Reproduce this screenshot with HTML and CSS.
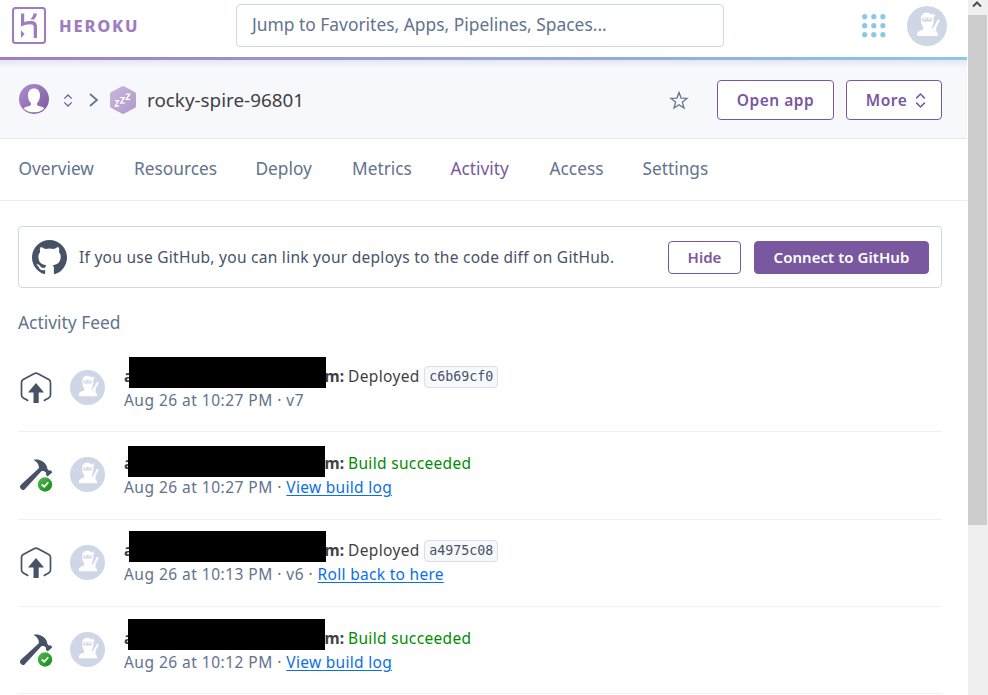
FILE: index.html
```html
<!DOCTYPE html>
<html lang="en">
<head>
<meta charset="utf-8">
<title>rocky-spire-96801 · Activity | Heroku</title>
<link rel="stylesheet" href="styles.css">
</head>
<body>
<svg class="defs" aria-hidden="true">
  <defs>
    <linearGradient id="purple" x1="0" y1="0" x2="1" y2="1"><stop stop-color="#b08ed2"/><stop offset="1" stop-color="#79589f"/></linearGradient>
    <linearGradient id="pale" x1="0" y1="0" x2="1" y2="1"><stop stop-color="#cab8de"/><stop offset="1" stop-color="#ae98c8"/></linearGradient>
    <linearGradient id="green" x1="0" y1="0" x2="1" y2="1"><stop stop-color="#55b755"/><stop offset="1" stop-color="#118c11"/></linearGradient>
  </defs>
  <symbol id="ninja" viewBox="0 0 40 40">
    <circle cx="20" cy="20" r="20" fill="#cfd7e6"/>
    <path fill="#fff" d="M14 12.500C14 8.500 17 6.500 20 6.700c2 0 3.500.700 4.500 1.800l3-1.300-.8 2 2.200.3-2.400 1.400c.5 3.500.3 7.500-1.500 9.800-.5 1.300-.3 2.600.5 3.300 2.500.8 5.500 2 5.500 5 0 .7-.8 1-1.500 1H11.500c-1 0-1.500-.5-1.500-1.200 0-2.700 2-4 5-4.700 1.300-.5 1.700-2.200.9-3.600-1.600-2-2.100-5-1.900-8z"/>
    <path fill="#fff" d="M26.500 21.500l4.500-8.200 1.900 1-4.100 8.400 1 1-1 1.500-3.800-2.200.6-1.500z"/>
    <rect x="15" y="11.500" width="10" height="4" rx="1.800" fill="#cfd7e6"/>
    <path d="M16 13h3.400M20.800 13h3.200" stroke="#fff" stroke-width="1.300"/>
    <path d="M16.500 13.700h2M21.500 13.700h2" stroke="#cfd7e6" stroke-width=".8"/>
  </symbol>
  <symbol id="deploy" viewBox="0 0 32 32">
    <path d="M8.300 28.800L3.300 26Q1.500 25 1.500 23V10.500Q1.500 8.500 3.200 7.500L14 1.700Q16 .6 18 1.700L28.800 7.500Q30.500 8.500 30.500 10.500V23Q30.500 25 28.700 26L23.700 28.800" fill="none" stroke="#475266" stroke-width="1.700"/>
    <path fill="#475266" d="M16 11l8 9.500h-5.300V31h-5.200V20.500H8z"/>
  </symbol>
  <symbol id="build" viewBox="0 0 34 34">
    <path fill="#475266" d="M14.500.700C20-.5 25 2 27.500 6.500c.7 1.600.5 3.200 1.500 4.200l1.600 1.100 1.400-.5 1.200 2.200-4.700 4-1.700-2.200.4-1.500-2.200-1.900-2.400.2L6.500 29.600c-1.500 2-3 2-4.500.5S.500 27 2.200 25.500L19.800 9.300c.6-3.900-1.900-6.700-5.300-8.600z"/>
    <circle cx="26" cy="25.500" r="7.200" fill="url(#green)"/>
    <path d="M22.800 25.500l2.400 2.200 4.100-4.500" fill="none" stroke="#fff" stroke-width="1.700"/>
  </symbol>
  <symbol id="updown" viewBox="0 0 10 14"><path d="M1 5l4-4 4 4M1 9l4 4 4-4" fill="none" stroke="currentColor" stroke-width="1.400"/></symbol>
</svg>
<div class="screen">
<main class="page">
  <header class="topbar">
    <svg class="logo" viewBox="0 0 34 37"><rect x="1" y="1" width="32" height="35" rx="2.500" fill="none" stroke="#9e7cc1" stroke-width="2"/><path fill="#9e7cc1" d="M9 6.500h3.200v8.600c2-.7 4-1 6.300-1 4.500 0 6.500 2 6.500 5.400V31h-3.300V20c0-2-1-2.800-3.400-2.800-3 0-6 .8-9.300 2.400zM9 23.300l3.600 3.700L9 31zM21.500 6.500H25c-.4 2.200-1.500 4.300-3 6h-3.600c1.600-1.800 2.700-3.800 3.100-6z"/></svg>
    <span class="brand">HEROKU</span>
    <div class="search"><span>Jump to Favorites, Apps, Pipelines, Spaces...</span></div>
    <svg class="grid-icon" viewBox="0 0 24 24" fill="#8bc7e9"><circle cx="2.700" cy="2.700" r="2.600"/><circle cx="11.800" cy="2.700" r="2.600"/><circle cx="20.900" cy="2.700" r="2.600"/><circle cx="2.700" cy="11.700" r="2.600"/><circle cx="11.800" cy="11.700" r="2.600"/><circle cx="20.900" cy="11.700" r="2.600"/><circle cx="2.700" cy="20.700" r="2.600"/><circle cx="11.800" cy="20.700" r="2.600"/><circle cx="20.900" cy="20.700" r="2.600"/></svg>
    <svg class="me"><use href="#ninja"/></svg>
  </header>
  <div class="rainbow"></div>
  <section class="appbar">
    <svg class="owner" viewBox="0 0 30 30"><circle cx="15" cy="15" r="15" fill="url(#purple)"/><path fill="#fff" d="M15 4.500c3.800 0 6 2.700 6 6.800 0 3.700-1.200 6.300-3 8-.3 1.600.5 2.400 2 2.800 2.100.5 4.200 1 5.300 2.300C22.500 27 19 28.300 15 28.300S7.500 27 4.700 24.400C5.800 23.100 7.900 22.600 10 22.100c1.500-.4 2.300-1.200 2-2.800-1.800-1.700-3-4.300-3-8 0-4.100 2.200-6.800 6-6.800z"/></svg>
    <svg class="updown"><use href="#updown"/></svg>
    <svg class="chev" viewBox="0 0 9 14"><path d="M1 1l7 6-7 6" fill="none" stroke="#62738d" stroke-width="1.700"/></svg>
    <svg class="hex" viewBox="0 0 26 28"><path fill="url(#pale)" d="M11.700.4q1.300-.7 2.600 0L24.700 6Q26 6.700 26 8v12q0 1.300-1.300 2l-10.400 5.600q-1.300.7-2.600 0L1.300 22Q0 21.300 0 20V8q0-1.300 1.300-2z"/><g fill="none" stroke="#fff" stroke-width="1.300"><path d="M5 14.700h3.600L5.300 20H9M10.300 11.600h4l-3.600 5.500h4.100M15.700 8.200h4l-3.500 5.200h4"/></g></svg>
    <h1 class="app-name">rocky-spire-96801</h1>
    <svg class="star" viewBox="0 0 20 19"><path d="M10 1.500l2.100 5.600 6 .3-4.700 3.700 1.600 5.900-5-3.300L5 17l1.600-5.900L1.900 7.400l6-.3z" fill="none" stroke="#62738d" stroke-width="1.300"/></svg>
    <button class="btn open"><span>Open app</span></button>
    <button class="btn more"><span>More</span><svg class="updown" viewBox="0 0 10 14"><use href="#updown" width="10" height="14"/></svg></button>
  </section>
  <nav class="tabs"><a class="t1">Overview</a><a class="t2">Resources</a><a class="t3">Deploy</a><a class="t4">Metrics</a><a class="t5 active">Activity</a><a class="t6">Access</a><a class="t7">Settings</a></nav>
  <section class="content">
    <div class="github">
      <svg class="octo" viewBox="0 0 16 16"><path fill="#475266" d="M8 0C3.580 0 0 3.580 0 8c0 3.540 2.290 6.530 5.470 7.590.4.070.55-.17.55-.38 0-.19-.01-.82-.01-1.490-2.010.37-2.530-.49-2.690-.94-.09-.23-.48-.94-.82-1.130-.28-.15-.68-.52-.01-.53.63-.01 1.080.58 1.230.82.72 1.210 1.870.87 2.330.66.070-.52.28-.87.510-1.070-1.780-.2-3.640-.89-3.640-3.950 0-.87.310-1.590.82-2.150-.08-.2-.36-1.020.08-2.120 0 0 .67-.21 2.200.82.640-.18 1.320-.27 2-.27s1.360.09 2 .27c1.530-1.040 2.200-.82 2.200-.82.440 1.100.16 1.920.08 2.120.51.560.82 1.270.82 2.150 0 3.070-1.870 3.750-3.650 3.950.29.25.54.73.54 1.480 0 1.070-.01 1.930-.01 2.200 0 .21.15.46.55.38A8.010 8.010 0 0016 8c0-4.420-3.580-8-8-8z"/></svg>
      <p><span>If you use GitHub, you can link your deploys to the code diff on GitHub.</span></p>
      <button class="btn hide"><span>Hide</span></button>
      <button class="btn connect"><span>Connect to GitHub</span></button>
    </div>
    <h2>Activity Feed</h2>
    <ul class="feed">
      <li class="r1"><svg class="kind"><use href="#deploy"/></svg><svg class="who"><use href="#ninja"/></svg><div class="info"><p class="line"><span class="mail"><b>a</b><b>m:</b><i class="bar"></i></span><span class="dep">Deployed</span><code>c6b69cf0</code></p><p class="meta"><span>Aug 26 at 10:27 PM · v7</span></p></div></li>
      <li class="r2"><svg class="kind build"><use href="#build"/></svg><svg class="who"><use href="#ninja"/></svg><div class="info"><p class="line"><span class="mail"><b>a</b><b>m:</b><i class="bar"></i></span><span class="ok">Build succeeded</span></p><p class="meta"><span>Aug 26 at 10:27 PM · </span><a class="log">View build log</a></p></div></li>
      <li class="r3"><svg class="kind"><use href="#deploy"/></svg><svg class="who"><use href="#ninja"/></svg><div class="info"><p class="line"><span class="mail"><b>a</b><b>m:</b><i class="bar"></i></span><span class="dep">Deployed</span><code>a4975c08</code></p><p class="meta"><span>Aug 26 at 10:13 PM · v6 · </span><a class="roll">Roll back to here</a></p></div></li>
      <li class="r4"><svg class="kind build"><use href="#build"/></svg><svg class="who"><use href="#ninja"/></svg><div class="info"><p class="line"><span class="mail"><b>a</b><b>m:</b><i class="bar"></i></span><span class="ok">Build succeeded</span></p><p class="meta"><span>Aug 26 at 10:12 PM · </span><a class="log">View build log</a></p></div></li>
    </ul>
  </section>
</main>
<aside class="scroll"><div class="up"><svg viewBox="0 0 10 7"><path d="M1 5.500l4-4 4 4" fill="none" stroke="#505050" stroke-width="2"/></svg></div><div class="thumb"></div></aside>
</div>
</body>
</html>
```
FILE: styles.css
```css
* { box-sizing: border-box; }
body, h1, h2, p, ul { margin: 0; padding: 0; }
body { background: #fff; color: #3f3f44; font: 15.500px/24px "Noto Sans", "Open Sans", sans-serif; overflow: hidden; }
.defs { position: absolute; width: 0; height: 0; }
svg { display: block; flex: none; overflow: visible; }
.screen { display: flex; height: 695px; overflow: hidden; }
.page { width: 967px; flex: none; }
span, a, h1, h2 { white-space: pre; }

.topbar { display: flex; height: 57px; align-items: flex-start; padding-left: 12px; }
.logo { width: 34px; height: 37px; margin-top: 7px; }
.brand { width: 177px; margin: 14px 0 0 13px; color: #9e7cc1; font-weight: 800; font-size: 16.500px; letter-spacing: 1.800px; }
.search { width: 488px; height: 43px; margin-top: 4px; padding: 7px 15px; border: 1px solid #cfd7e6; border-radius: 4px; color: #62738d; font-size: 17.400px; }
.grid-icon { width: 24px; height: 24px; margin: 14px 0 0 138px; }
.me { width: 40px; height: 40px; margin: 6px 0 0 21px; }
.rainbow { height: 3px; background: linear-gradient(90deg, #a17dc2, #8bc7e9); }

.appbar { display: flex; align-items: center; height: 79px; padding: 2px 25px 0 19px; background: linear-gradient(#e4e7ee, #f7f8fc 8px); border-bottom: 1px solid #e1e8f2; color: #79589f; }
.owner { width: 30px; height: 30px; margin-top: -3px; }
.updown { width: 10px; height: 13px; margin-left: 14px; }
.chev { width: 9px; height: 14px; margin-left: 16px; }
.hex { width: 26px; height: 28px; margin: -1px 0 0 12px; }
.app-name { width: 522px; margin-left: 11px; color: #3f3f44; font-weight: 400; font-size: 18.850px; }
.star { width: 20px; height: 19px; }
.btn { display: flex; flex: none; align-items: center; justify-content: center; padding: 0; border: 1px solid #79589f; border-radius: 4px; background: #fff; color: #79589f; font: 600 15.500px/24px "Noto Sans", sans-serif; letter-spacing: .500px; }
.open { width: 117px; height: 40px; margin-left: 28px; }
.more { width: 96px; height: 40px; margin-left: 12px; padding-left: 4px; }
.more .updown { width: 11px; height: 15px; margin-left: 8px; }

.tabs { display: flex; height: 62px; padding: 18px 0 0 18.500px; border-bottom: 1px solid #e9edf4; color: #62738d; font-size: 17.300px; }
.t1 { width: 115.500px; } .t2 { width: 121.500px; } .t3 { width: 96.500px; } .t4 { width: 98.500px; } .t5 { width: 99px; } .t6 { width: 93px; }
.tabs .active { color: #79589f; }

.content { padding: 25px 25px 0 18px; }
.github { display: flex; align-items: center; height: 62px; padding: 0 12px 0 13px; border: 1px solid #cfd7e6; border-radius: 4px; color: #475266; }
.octo { width: 35px; height: 35px; }
.github p { flex: 1; margin-left: 12px; letter-spacing: .270px; }
.hide { width: 73px; height: 33px; font-size: 15px; letter-spacing: 0; }
.connect { width: 175px; height: 33px; margin-left: 13px; background: #79589f; color: #fff; font-size: 15px; letter-spacing: .050px; }
h2 { margin-top: 22px; color: #62738d; font-weight: 400; font-size: 17.400px; line-height: 24px; }
.feed { margin-top: 10px; list-style: none; }
.feed li { display: flex; height: 88px; border-bottom: 1px solid #eff0f2; }
.feed .r3, .feed .r4 { height: 87px; }
.kind { width: 32px; height: 32px; margin: 28px .500px 0 1.500px; }
.build { width: 34px; height: 34px; margin: 27px -2px 0 1px; }
.who { width: 35px; height: 35px; margin: 26px 0 0 18px; }
.build + .who { margin-left: 19px; }
.r2 .who, .r3 .who, .r4 .who { margin-top: 25px; }
.r3 .kind { margin-top: 27px; }
.info { margin: 20px 0 0 19px; }
.r2 .info, .r4 .info { margin-top: 19px; }
.r3 .info { margin-top: 18px; }
.line, .meta { display: flex; height: 24px; }
.line { letter-spacing: .350px; }
.mail { position: relative; display: flex; justify-content: space-between; width: 220px; margin-right: 4px; letter-spacing: 0; }
.mail b { font-weight: 700; font-size: 15.500px; }
.bar { position: absolute; left: 5px; top: -7px; width: 197px; height: 31px; background: #000; }
.r2 .bar, .r4 .bar { left: 4px; top: -5px; }
.r4 .bar { top: -7px; }
.ok { letter-spacing: .330px; color: #018c01; }
code { width: 74px; height: 22px; margin: 2px 0 0 4.500px; padding: 0 4px; border: 1px solid #dcdfe6; border-radius: 4px; background: #f7f8fb; color: #475266; font: 13.300px/20px "DejaVu Sans Mono", monospace; letter-spacing: 0; }
.meta { color: #62738d; letter-spacing: .470px; }
.meta a { color: #0a70e8; letter-spacing: .300px; text-decoration: underline; text-underline-offset: 2px; }

.scroll { width: 20px; margin-left: auto; background: #f0f0f0; }
.up { height: 15px; padding: 1px 0 0 4px; }
.up svg { width: 10px; height: 7px; }
.thumb { width: 19px; height: 510px; background: #cdcdcd; }
```
